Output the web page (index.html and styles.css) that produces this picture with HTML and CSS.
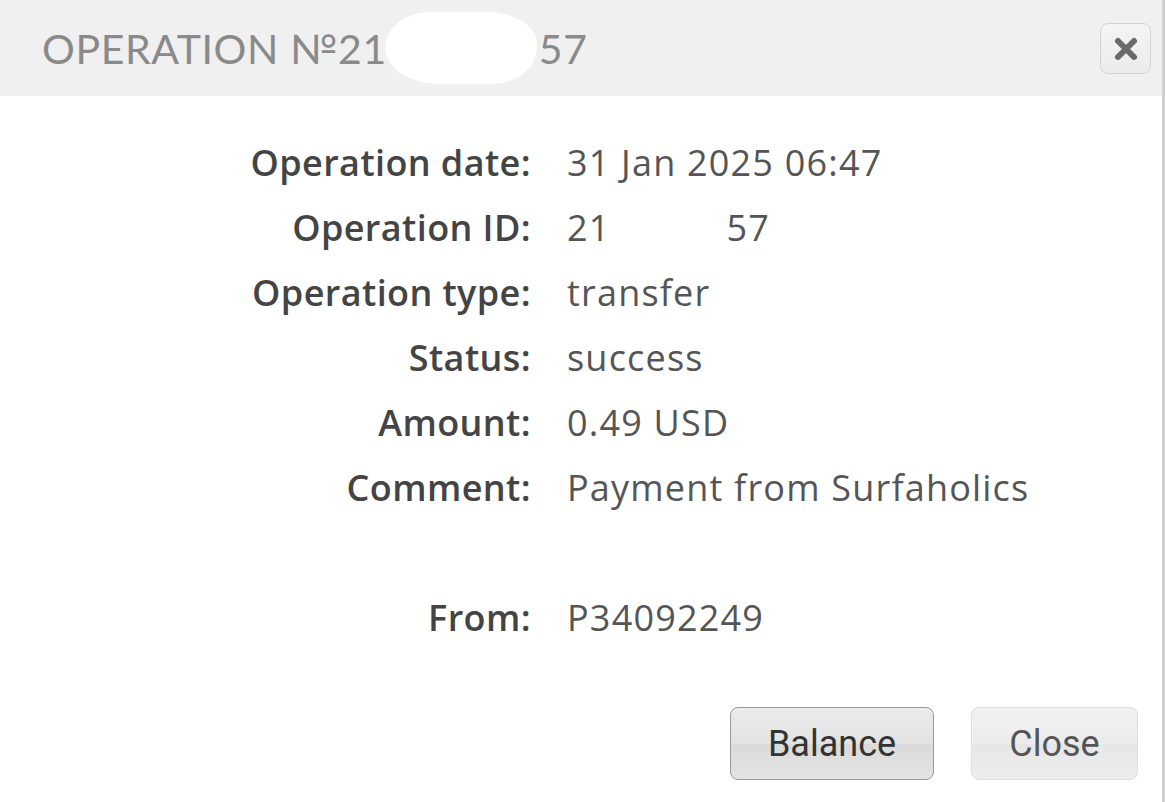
FILE: index.html
```html
<!DOCTYPE html>
<html>
<head>
<meta charset="utf-8">
<link rel="stylesheet" href="styles.css">
</head>
<body>
<div class="dialog">
  <div class="header">
    <h1 class="title">OPERATION №21<span class="blob"></span>57</h1>
    <button class="x-btn" aria-label="close">
      <svg width="26" height="26" viewBox="0 0 26 26"><path d="M5 5 L21 21 M21 5 L5 21" stroke="#6a6a6a" stroke-width="6" stroke-linecap="round"/></svg>
    </button>
  </div>
  <div class="content">
    <div class="grid">
      <div class="label">Operation date:</div><div class="value">31 Jan 2025 06:47</div>
      <div class="label">Operation ID:</div><div class="value">21<span class="tail">57</span></div>
      <div class="label">Operation type:</div><div class="value">transfer</div>
      <div class="label">Status:</div><div class="value">success</div>
      <div class="label">Amount:</div><div class="value">0.49 USD</div>
      <div class="label">Comment:</div><div class="value">Payment from Surfaholics</div>
      <div class="label spacer"></div><div class="value spacer"></div>
      <div class="label">From:</div><div class="value">P34092249</div>
    </div>
    <div class="actions">
      <button class="btn primary">Balance</button>
      <button class="btn secondary">Close</button>
    </div>
  </div>
</div>
</body>
</html>
```
FILE: styles.css
```css
html, body {
  margin: 0;
  padding: 0;
  background: #fff;
}
.dialog {
  width: 1162px;
  height: 802px;
  border-right: 3px solid #d0d0d0;
  display: flex;
  flex-direction: column;
  background: #fff;
}
.header {
  flex: 0 0 96px;
  background: #f0f0f0;
  display: flex;
  align-items: center;
  justify-content: space-between;
  padding: 0 11px 0 42px;
  box-sizing: border-box;
}
.title {
  margin: 0;
  font-family: "Lato", sans-serif;
  font-weight: 400;
  font-size: 41px;
  letter-spacing: 0.6px;
  color: #8a8a8a;
  display: flex;
  align-items: center;
}
.blob {
  display: inline-block;
  width: 152px;
  height: 72px;
  background: #fff;
  border-radius: 45px 50px 45px 55px / 36px 32px 36px 36px;
  margin: 0 2px 0 -2px;
}
.x-btn {
  width: 51px;
  height: 51px;
  border: 1px solid #d4d4d4;
  border-radius: 8px;
  background: linear-gradient(#f4f4f4, #ececec);
  display: flex;
  align-items: center;
  justify-content: center;
  padding: 0;
  margin-top: 1px;
}
.content {
  flex: 1;
  display: flex;
  flex-direction: column;
}
.grid {
  display: grid;
  grid-template-columns: 531px 1fr;
  column-gap: 36px;
  padding-top: 34px;
  grid-auto-rows: 65px;
  font-family: "Open Sans", sans-serif;
  font-size: 36px;
  align-items: center;
}
.grid > .spacer {
  height: 62px;
}
.label {
  text-align: right;
  font-weight: 600;
  letter-spacing: 0.4px;
  color: #444;
  line-height: 65px;
}
.value {
  color: #555;
  letter-spacing: 1.2px;
  line-height: 65px;
}
.tail {
  margin-left: 116px;
}
.actions {
  display: flex;
  justify-content: flex-end;
  gap: 37px;
  padding-right: 24px;
  margin-top: auto;
  margin-bottom: 22px;
}
.btn {
  height: 73px;
  border-radius: 8px;
  font-family: "Roboto", sans-serif;
  font-size: 36px;
  padding: 0;
}
.primary {
  width: 204px;
  border: 1.5px solid #999;
  background: linear-gradient(#ebebeb 0%, #e3e3e3 50%, #dadada 51%, #e4e4e4 100%);
  color: #333;
}
.secondary {
  width: 167px;
  border: 1.5px solid #ddd;
  background: linear-gradient(#f2f2f2 0%, #ececec 50%, #e6e6e6 51%, #eeeeee 100%);
  color: #555;
}
```
